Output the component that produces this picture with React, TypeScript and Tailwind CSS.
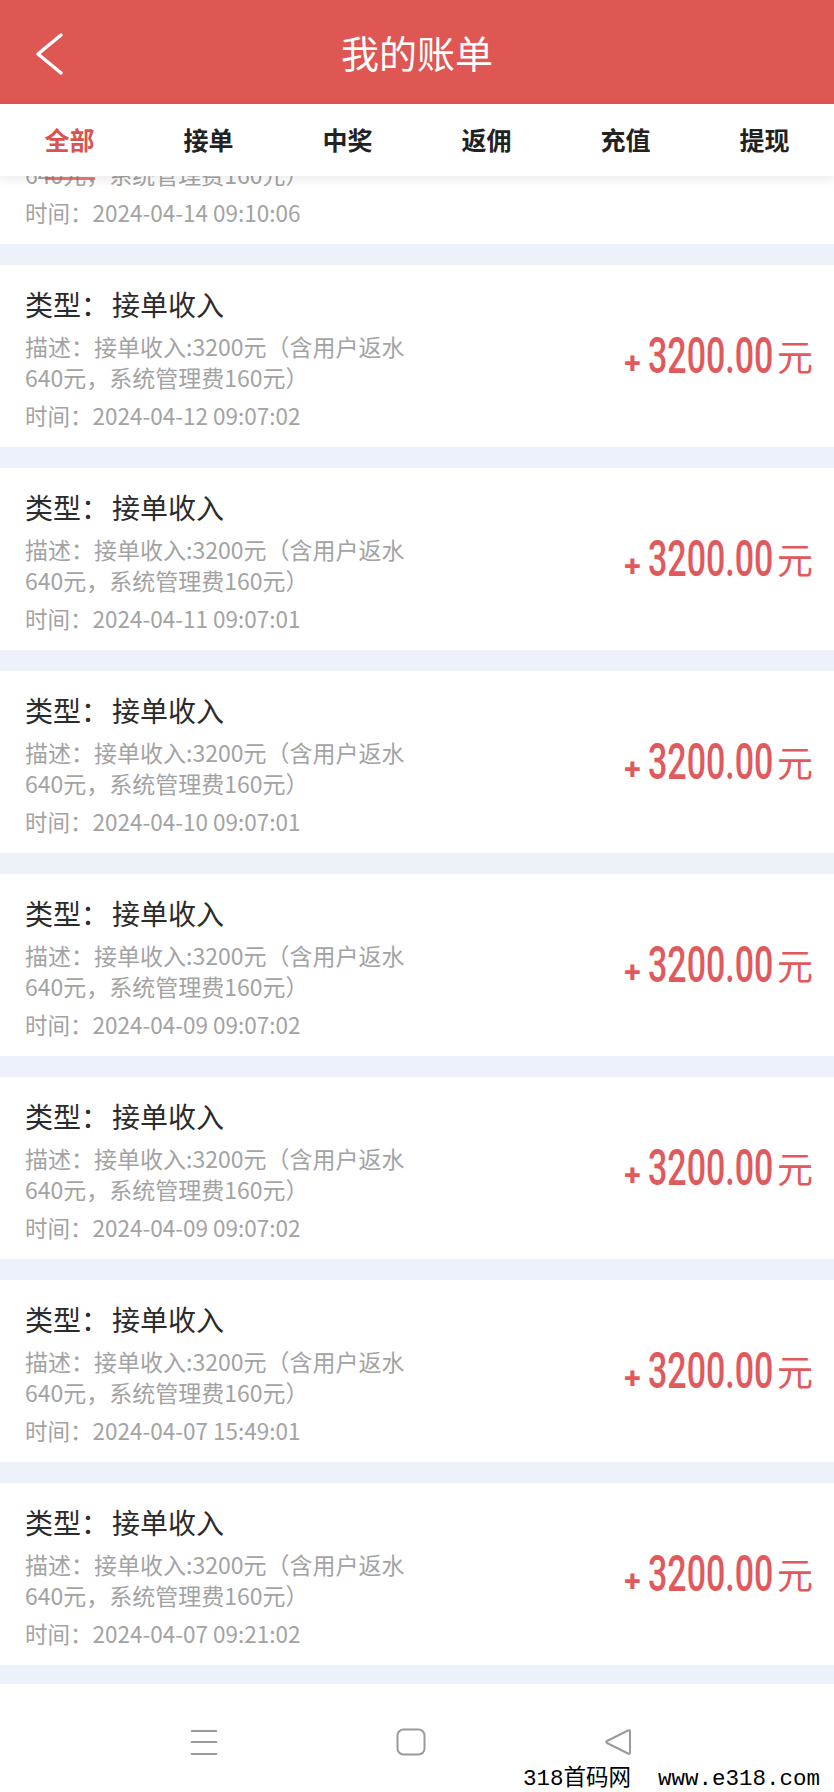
import React from 'react';

const tabs = ['全部', '接单', '中奖', '返佣', '充值', '提现'];

const records = [
  '2024-04-14 09:10:06',
  '2024-04-12 09:07:02',
  '2024-04-11 09:07:01',
  '2024-04-10 09:07:01',
  '2024-04-09 09:07:02',
  '2024-04-09 09:07:02',
  '2024-04-07 15:49:01',
  '2024-04-07 09:21:02',
];

function BillCard({ time }: { time: string }) {
  return (
    <div className="h-[182px] bg-white flex items-center justify-between pl-[25px] pr-[21px]">
      <div className="flex flex-col h-full">
        <div className="mt-[24px] h-[30px] leading-[30px] text-[28px] text-[#2b2b2b] whitespace-nowrap">
          类型：<span className="ml-[3px]">接单收入</span>
        </div>
        <div className="mt-[12px] text-[23px] leading-[31px] text-[#a3a3a3] whitespace-nowrap">
          <div>描述：接单收入:3200元（含用户返水</div>
          <div>640元，系统管理费160元）</div>
        </div>
        <div className="mt-[7px] h-[30px] leading-[30px] text-[22.5px] text-[#a3a3a3] whitespace-nowrap">
          时间：{time}
        </div>
      </div>
      <div className="flex items-baseline text-[#e05a5d]">
        <span className="text-[30px] font-bold leading-none mr-[7px] font-['Roboto',sans-serif]">+</span>
        <span className="inline-block text-[50px] leading-none font-medium font-['Roboto',sans-serif] scale-x-[0.68] origin-left -mr-[58px]">
          3200.00
        </span>
        <span className="inline-block text-[36px] leading-none ml-[3px] -translate-y-[2px]">元</span>
      </div>
    </div>
  );
}

export default function App() {
  return (
    <div className="w-[834px] h-[1792px] flex flex-col overflow-hidden bg-white font-['Noto_Sans_CJK_SC','Noto_Sans',sans-serif]">
      {/* Header */}
      <div className="relative h-[104px] shrink-0 bg-[#de5753] flex items-center justify-center">
        <svg className="absolute left-[34px] top-[32px]" width="32" height="44" viewBox="0 0 32 44" fill="none">
          <polyline points="27,3 4,22 27,41" stroke="white" strokeWidth="3.5" strokeLinecap="round" strokeLinejoin="round" />
        </svg>
        <div className="text-white text-[38px] leading-none">我的账单</div>
      </div>

      {/* Tabs */}
      <div className="relative z-10 h-[72px] shrink-0 bg-white grid grid-cols-6 shadow-[0_4px_10px_rgba(0,0,0,0.08)]">
        {tabs.map((t, i) => (
          <div key={t} className="relative flex items-center justify-center">
            <span className={i === 0 ? 'text-[25px] font-bold text-[#d9534f]' : 'text-[25px] font-bold text-[#222]'}>{t}</span>
            {i === 0 && <div className="absolute bottom-[-4px] left-1/2 -translate-x-1/2 w-[50px] h-[3px] bg-[#d9534f] opacity-80" />}
          </div>
        ))}
      </div>

      {/* List */}
      <div className="flex-1 overflow-hidden bg-[#edf2fa]">
        <div className="-mt-[114px]">
          {records.map((time, i) => (
            <div key={i}>
              <BillCard time={time} />
              <div className="h-[21px] bg-[#edf2fa]" />
            </div>
          ))}
        </div>
      </div>

      {/* System nav bar */}
      <div className="relative h-[108px] shrink-0 bg-white">
        <div className="flex items-start pt-[44px]">
          <svg className="ml-[190px]" width="28" height="28" viewBox="0 0 28 28" fill="none">
            <line x1="1" y1="3" x2="27" y2="3" stroke="#9a9a9a" strokeWidth="2" />
            <line x1="1" y1="14" x2="27" y2="14" stroke="#9a9a9a" strokeWidth="2" />
            <line x1="1" y1="26" x2="27" y2="26" stroke="#9a9a9a" strokeWidth="2" />
          </svg>
          <svg className="ml-[178px]" width="30" height="28" viewBox="0 0 30 28" fill="none">
            <rect x="1.5" y="1.5" width="27" height="25" rx="6" stroke="#9a9a9a" strokeWidth="2" />
          </svg>
          <svg className="ml-[177px]" width="30" height="28" viewBox="0 0 30 28" fill="none">
            <path d="M25 2.5 L4 13 Q2.5 14 4 15 L25 25.5 Q27 26.5 27 24.5 L27 3.5 Q27 1.5 25 2.5 Z" stroke="#9a9a9a" strokeWidth="2" strokeLinejoin="round" />
          </svg>
        </div>
        <div className="absolute right-[14px] bottom-[2px] text-[22.5px] leading-none text-black whitespace-pre font-['Liberation_Mono','Noto_Sans_CJK_SC',monospace]">
          318首码网  www.e318.com
        </div>
      </div>
    </div>
  );
}
